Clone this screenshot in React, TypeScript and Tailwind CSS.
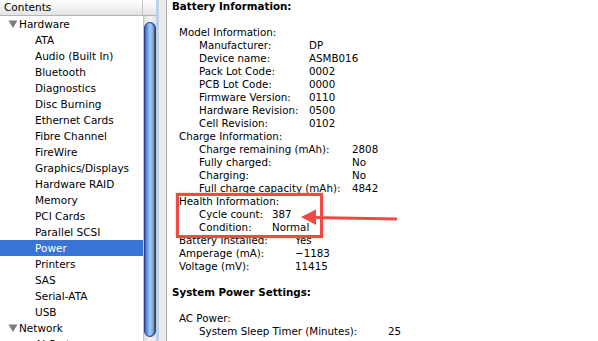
import React from "react";

const treeItems = [
  "ATA",
  "Audio (Built In)",
  "Bluetooth",
  "Diagnostics",
  "Disc Burning",
  "Ethernet Cards",
  "Fibre Channel",
  "FireWire",
  "Graphics/Displays",
  "Hardware RAID",
  "Memory",
  "PCI Cards",
  "Parallel SCSI",
  "Power",
  "Printers",
  "SAS",
  "Serial-ATA",
  "USB",
];

type Row =
  | { kind: "blank" }
  | { kind: "head"; text: string }
  | { kind: "l1"; text: string; value?: string; w?: number }
  | { kind: "l2"; text: string; value?: string; w: number };

const rows: Row[] = [
  { kind: "head", text: "Battery Information:" },
  { kind: "blank" },
  { kind: "l1", text: "Model Information:" },
  { kind: "l2", text: "Manufacturer:", value: "DP", w: 110 },
  { kind: "l2", text: "Device name:", value: "ASMB016", w: 110 },
  { kind: "l2", text: "Pack Lot Code:", value: "0002", w: 110 },
  { kind: "l2", text: "PCB Lot Code:", value: "0000", w: 110 },
  { kind: "l2", text: "Firmware Version:", value: "0110", w: 110 },
  { kind: "l2", text: "Hardware Revision:", value: "0500", w: 110 },
  { kind: "l2", text: "Cell Revision:", value: "0102", w: 110 },
  { kind: "l1", text: "Charge Information:" },
  { kind: "l2", text: "Charge remaining (mAh):", value: "2808", w: 153 },
  { kind: "l2", text: "Fully charged:", value: "No", w: 153 },
  { kind: "l2", text: "Charging:", value: "No", w: 153 },
  { kind: "l2", text: "Full charge capacity (mAh):", value: "4842", w: 153 },
  { kind: "l1", text: "Health Information:" },
  { kind: "l2", text: "Cycle count:", value: "387", w: 73 },
  { kind: "l2", text: "Condition:", value: "Normal", w: 73 },
  { kind: "l1", text: "Battery Installed:", value: "Yes", w: 116 },
  { kind: "l1", text: "Amperage (mA):", value: "\u22121183", w: 116 },
  { kind: "l1", text: "Voltage (mV):", value: "11415", w: 116 },
  { kind: "blank" },
  { kind: "head", text: "System Power Settings:" },
  { kind: "blank" },
  { kind: "l1", text: "AC Power:" },
  { kind: "l2", text: "System Sleep Timer (Minutes):", value: "25", w: 189 },
];

function Triangle() {
  return (
    <svg width="10" height="8" viewBox="0 0 10 8" className="shrink-0">
      <polygon points="0.5,0.5 9.5,0.5 5,8" fill="#7a7a7a" />
    </svg>
  );
}

export default function App() {
  return (
    <div
      className="relative flex w-[598px] h-[341px] overflow-hidden bg-white text-black"
      style={{ fontFamily: '"DejaVu Sans", Verdana, sans-serif' }}
    >
      {/* Left outline view */}
      <div className="flex flex-col w-[156px] h-full shrink-0">
        <div className="flex h-[16px] shrink-0 border-b border-[#b5b5b5] bg-gradient-to-b from-[#ffffff] via-[#f2f2f2] to-[#e3e3e3]">
          <div className="w-[143px] border-r border-[#c4c4c4] pl-[4px] text-[10.5px] leading-[15px]">
            Contents
          </div>
          <div className="flex-1" />
        </div>
        <div className="flex flex-1 min-h-0">
          <div className="w-[143px] text-[10.5px] leading-[16px] overflow-hidden">
            <div className="flex items-center h-[16px] pl-[8px] gap-[1px]">
              <Triangle />
              <span>Hardware</span>
            </div>
            {treeItems.map((t) => (
              <div
                key={t}
                className={
                  t === "Power"
                    ? "h-[16px] pl-[35px] bg-[#3875d7] text-white"
                    : "h-[16px] pl-[35px]"
                }
              >
                {t}
              </div>
            ))}
            <div className="flex items-center h-[16px] pl-[8px] gap-[1px]">
              <Triangle />
              <span>Network</span>
            </div>
            <div className="h-[16px] pl-[35px]">AirPort</div>
          </div>
          {/* scrollbar */}
          <div className="w-[13px] h-full bg-gradient-to-r from-[#dcdcdc] via-[#f4f4f4] to-[#e4e4e4] border-l border-[#c8c8c8] pt-[6px]">
            <div className="h-[315px] w-[12px] rounded-full border border-[#2a3f8a] bg-gradient-to-r from-[#3b64c8] via-[#a6d0fb] to-[#4f86dc] shadow-[inset_-1px_0_0_#555]" />
          </div>
        </div>
      </div>
      {/* focus ring + splitter */}
      <div className="w-[3px] h-full bg-[#bcd0ee] shrink-0" />
      <div className="w-[7px] h-full bg-[#ececec] shrink-0" />
      <div className="w-[1px] h-full bg-[#a8a8a8] shrink-0" />
      {/* Right content */}
      <div className="flex-1 h-full pl-[5px] text-[10.3px] leading-[13px] overflow-hidden">
        {rows.map((r, i) => {
          if (r.kind === "blank") return <div key={i} className="h-[13px]" />;
          if (r.kind === "head")
            return (
              <div key={i} className="h-[13px] font-bold">
                {r.text}
              </div>
            );
          if (r.kind === "l1")
            return (
              <div key={i} className="flex h-[13px] pl-[7px] whitespace-nowrap">
                <span className="shrink-0" style={r.w ? { width: r.w } : undefined}>
                  {r.text}
                </span>
                {r.value && <span>{r.value}</span>}
              </div>
            );
          return (
            <div key={i} className="flex h-[13px] pl-[27px] whitespace-nowrap">
              <span className="shrink-0" style={{ width: r.w }}>
                {r.text}
              </span>
              <span>{r.value}</span>
            </div>
          );
        })}
      </div>

      {/* Annotation box */}
      <div className="absolute left-[176px] top-[193px] w-[147px] h-[45px] border-[3px] border-[#ef4a44] shadow-[0_0_2px_rgba(239,74,68,0.5)]" />
      {/* Annotation arrow */}
      <svg
        className="absolute left-0 top-0 pointer-events-none"
        width="598"
        height="341"
        viewBox="0 0 598 341"
      >
        <line x1="397" y1="219" x2="312" y2="217.5" stroke="#ef4a44" strokeWidth="3.2" />
        <polygon points="301,217 316,209.5 316,225" fill="#ef4a44" />
      </svg>
    </div>
  );
}
